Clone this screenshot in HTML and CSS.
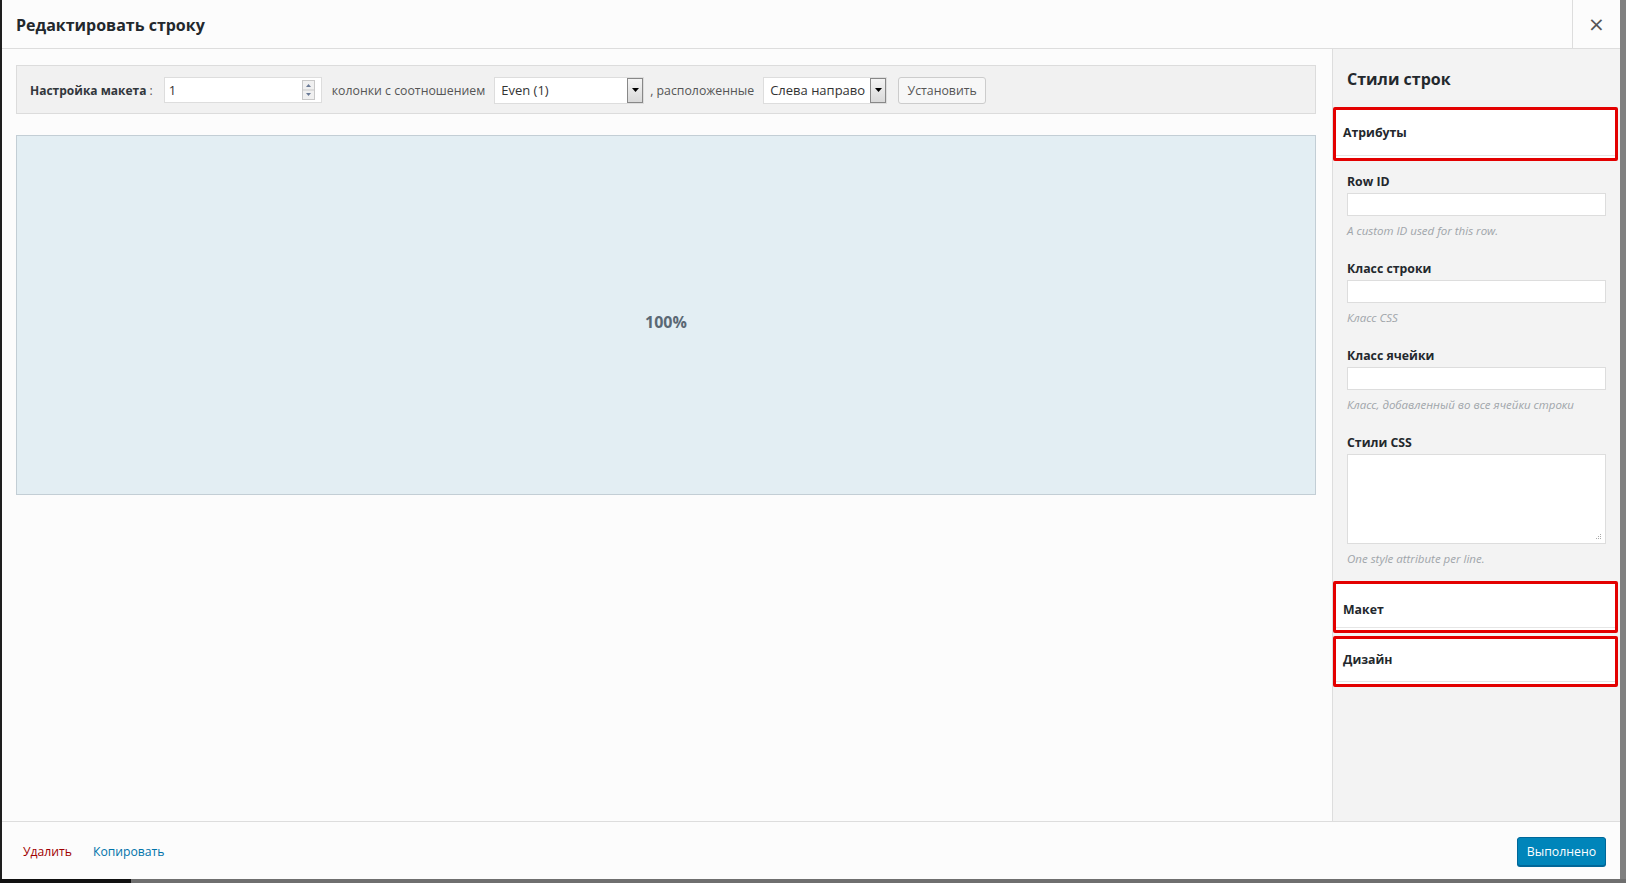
FILE: index.html
```html
<!DOCTYPE html>
<html lang="ru">
<head>
<meta charset="utf-8">
<title>Редактировать строку</title>
<link rel="stylesheet" href="styles.css">
</head>
<body>
<div class="screen">
  <div class="edge-left"></div>
  <div class="modal">
    <header class="modal-header">
      <h1 class="modal-title">Редактировать строку</h1>
      <button class="close-btn" type="button">×</button>
    </header>
    <div class="modal-body">
      <main class="builder">
        <div class="toolbar">
          <span class="tb-label"><b>Настройка макета</b> :</span>
          <div class="num-input">
            <span class="num-value">1</span>
            <span class="spinner">
              <svg width="13" height="20" viewBox="0 0 13 20">
                <rect x="0.5" y="0.5" width="12" height="19" fill="#f0f0f0" stroke="#c8c8c8"/>
                <line x1="1" y1="10" x2="12" y2="10" stroke="#c8c8c8"/>
                <path d="M4 7 L6.5 4 L9 7 Z" fill="#6a7a96"/>
                <path d="M4 13 L6.5 16 L9 13 Z" fill="#6a7a96"/>
              </svg>
            </span>
          </div>
          <span class="tb-text tb-cols">колонки с соотношением</span>
          <div class="select sel-ratio">
            <span class="sel-value">Even (1)</span>
            <span class="sel-arrow"><svg width="7" height="4" viewBox="0 0 7 4"><path d="M0 0 H7 L3.5 4 Z" fill="#000"/></svg></span>
          </div>
          <span class="tb-text tb-dir">, расположенные</span>
          <div class="select sel-dir">
            <span class="sel-value">Слева направо</span>
            <span class="sel-arrow"><svg width="7" height="4" viewBox="0 0 7 4"><path d="M0 0 H7 L3.5 4 Z" fill="#000"/></svg></span>
          </div>
          <button class="btn-set" type="button">Установить</button>
        </div>
        <div class="cells">
          <div class="cell">100%</div>
        </div>
      </main>
      <aside class="sidebar">
        <h2 class="side-title">Стили строк</h2>
        <div class="section section-attr"><span>Атрибуты</span></div>
        <div class="fields">
          <div class="field">
            <label class="f-label">Row ID</label>
            <div class="f-input"></div>
            <div class="f-desc">A custom ID used for this row.</div>
          </div>
          <div class="field">
            <label class="f-label">Класс строки</label>
            <div class="f-input"></div>
            <div class="f-desc">Класс CSS</div>
          </div>
          <div class="field">
            <label class="f-label">Класс ячейки</label>
            <div class="f-input"></div>
            <div class="f-desc">Класс, добавленный во все ячейки строки</div>
          </div>
          <div class="field field-last">
            <label class="f-label">Стили CSS</label>
            <div class="f-textarea">
              <svg class="grip" width="6" height="6" viewBox="0 0 6 6">
                <rect x="4" y="0" width="1" height="1" fill="#aaa"/>
                <rect x="2" y="2" width="1" height="1" fill="#aaa"/>
                <rect x="4" y="2" width="1" height="1" fill="#aaa"/>
                <rect x="0" y="4" width="1" height="1" fill="#aaa"/>
                <rect x="2" y="4" width="1" height="1" fill="#aaa"/>
                <rect x="4" y="4" width="1" height="1" fill="#aaa"/>
              </svg>
            </div>
            <div class="f-desc">One style attribute per line.</div>
          </div>
        </div>
        <div class="section section-layout"><span>Макет</span></div>
        <div class="section section-design"><span>Дизайн</span></div>
      </aside>
    </div>
    <footer class="modal-footer">
      <a class="link-delete" href="#">Удалить</a>
      <a class="link-copy" href="#">Копировать</a>
      <button class="btn-done" type="button">Выполнено</button>
    </footer>
  </div>
  <div class="edge-right"></div>
</div>
<div class="bottom-strip"><div class="bottom-dark"></div></div>
</body>
</html>
```
FILE: styles.css
```css
* { box-sizing: border-box; }

html, body {
  margin: 0;
  padding: 0;
}

body {
  width: 1626px;
  height: 883px;
  overflow: hidden;
  background: #7a7a7a;
  font-family: "Open Sans", "Noto Sans", sans-serif;
  font-size: 13px;
  color: #444;
}

.screen {
  display: flex;
  height: 879px;
}

.edge-left {
  width: 2px;
  background: #1e1e1e;
}

.edge-right {
  flex: 1;
  background: #808080;
}

.bottom-strip {
  height: 4px;
  background: #6f6f6f;
}

.bottom-dark {
  width: 131px;
  height: 4px;
  background: #111;
}

.modal {
  width: 1618px;
  display: flex;
  flex-direction: column;
  background: #fcfcfc;
}

/* header */
.modal-header {
  height: 49px;
  display: flex;
  align-items: stretch;
  border-bottom: 1px solid #dddddd;
  background: #fcfcfc;
}

.modal-title {
  flex: 1;
  margin: 0;
  padding: 1px 0 0 14px;
  display: flex;
  align-items: center;
  font-size: 16px;
  font-weight: 700;
  color: #23282d;
}

.close-btn {
  width: 48px;
  border: 0;
  border-left: 1px solid #dddddd;
  background: transparent;
  font-family: "DejaVu Sans", sans-serif;
  font-size: 20px;
  color: #555;
  padding: 0 0 1px 0;
}

/* body */
.modal-body {
  flex: 1;
  display: flex;
  min-height: 0;
}

.builder {
  flex: 1;
  padding: 16px 16px 0 14px;
  background: #fcfcfc;
}

.toolbar {
  height: 49px;
  border: 1px solid #dcdcdc;
  background: #f1f1f1;
  display: flex;
  align-items: center;
  padding: 1px 13px 0;
}

.tb-label {
  color: #555;
  font-size: 12px;
}

.tb-label b {
  color: #32373c;
}

.num-input {
  margin-left: 11px;
  width: 158px;
  height: 26px;
  background: #fff;
  border: 1px solid #dddddd;
  display: flex;
  align-items: center;
  padding: 0 6px 0 4px;
}

.num-value {
  flex: 1;
  color: #333;
  font-size: 13px;
}

.spinner {
  display: flex;
}

.tb-text {
  color: #555;
  font-size: 12.3px;
}

.tb-cols { margin-left: 10px; }
.tb-dir { margin-left: 6px; }

.select {
  height: 27px;
  background: #fff;
  border: 1px solid #dddddd;
  display: flex;
  align-items: center;
  padding-left: 6px;
}

.sel-ratio { margin-left: 9px; width: 150px; }
.sel-dir { margin-left: 9px; width: 124px; }

.sel-value {
  flex: 1;
  color: #333;
  font-size: 13px;
  white-space: nowrap;
}

.sel-arrow {
  width: 16px;
  height: 25px;
  border: 1px solid #888;
  background: linear-gradient(#f4f4f4, #d9d9d9);
  display: flex;
  align-items: center;
  justify-content: center;
}

.btn-set {
  margin-left: 11px;
  width: 88px;
  height: 27px;
  border: 1px solid #cccccc;
  border-radius: 3px;
  background: #f7f7f7;
  font-family: inherit;
  font-size: 12.3px;
  color: #555;
  padding: 0;
}

.cells {
  margin-top: 21px;
  height: 360px;
  border: 1px solid #c3ced5;
  background: #e3eef3;
  display: flex;
}

.cell {
  flex: 1;
  display: flex;
  align-items: center;
  justify-content: center;
  padding-top: 14px;
  font-size: 16px;
  font-weight: 700;
  color: #5a6874;
}

/* sidebar */
.sidebar {
  width: 288px;
  border-left: 1px solid #dddddd;
  background: #f3f3f3;
  padding-top: 18px;
  display: flex;
  flex-direction: column;
}

.side-title {
  margin: 0 0 0 14px;
  font-size: 16px;
  line-height: 24px;
  font-weight: 700;
  color: #23282d;
}

.section {
  margin-right: 2px;
  border: 3px solid #e30000;
  border-radius: 2px;
  background: #fff;
  display: flex;
  align-items: center;
  padding-left: 7px;
  font-weight: 700;
  font-size: 12.3px;
  color: #23282d;
  box-shadow: inset 0 -2px 0 #fff, inset 0 -3px 0 #e6e6e6;
}

.section-attr {
  margin-top: 16px;
  height: 54px;
  padding-bottom: 3px;
}

.section-layout {
  height: 52px;
  padding-top: 5px;
}

.section-design {
  margin-top: 3px;
  height: 51px;
  padding-bottom: 5px;
}

.fields {
  padding: 11px 14px 0 14px;
}

.field {
  display: flex;
  flex-direction: column;
  margin-bottom: 19px;
}

.field-last {
  margin-bottom: 13px;
}

.f-label {
  font-size: 12.3px;
  font-weight: 700;
  line-height: 20px;
  color: #23282d;
  margin-bottom: 1px;
}

.f-input {
  height: 23px;
  background: #fff;
  border: 1px solid #dddddd;
}

.f-textarea {
  height: 90px;
  background: #fff;
  border: 1px solid #dddddd;
  display: flex;
  justify-content: flex-end;
  align-items: flex-end;
  padding: 0 3px 3px 0;
}

.f-desc {
  margin-top: 6px;
  font-size: 11.5px;
  line-height: 18px;
  font-style: italic;
  color: #a0a5aa;
}

/* footer */
.modal-footer {
  height: 58px;
  border-top: 1px solid #dddddd;
  background: #fcfcfc;
  display: flex;
  align-items: center;
  padding: 2px 14px 0 21px;
}

.modal-footer a {
  text-decoration: none;
  font-size: 12.2px;
}

.link-delete { color: #a00000; }
.link-copy { color: #0073aa; margin-left: 21px; }

.btn-done {
  margin-left: auto;
  width: 89px;
  height: 29px;
  border: 1px solid #006799;
  border-radius: 3px;
  background: #0085ba;
  color: #fff;
  font-family: inherit;
  font-size: 12.3px;
  padding: 0;
  box-shadow: 0 1px 0 #006799;
}
```
